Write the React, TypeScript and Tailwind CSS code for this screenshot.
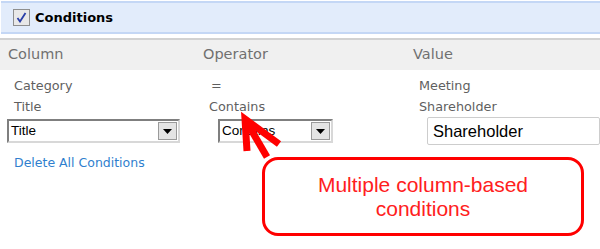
import React from "react";

const ui = { fontFamily: '"DejaVu Sans", Verdana, sans-serif' };
const arial = { fontFamily: '"Liberation Sans", Arial, sans-serif' };

function Select({ width, value }: { width: number; value: string }) {
  return (
    <div
      className="flex h-[24px] items-center border-2 border-t-[#7f7f7f] border-l-[#7f7f7f] border-b-[#d8d8d8] border-r-[#d8d8d8] bg-white"
      style={{ width }}
    >
      <span className="flex-1 pl-[2px] text-[13.5px] text-black" style={arial}>
        {value}
      </span>
      <div className="mr-[1px] flex h-[18px] w-[19px] items-center justify-center border border-[#9a9a9a] bg-[#e4e4e4]">
        <svg width="9" height="5" viewBox="0 0 9 5">
          <path d="M0 0h9L4.5 5z" fill="#000" />
        </svg>
      </div>
    </div>
  );
}

export default function App() {
  return (
    <div className="relative h-[249px] w-[600px] overflow-hidden bg-white" style={ui}>
      {/* Section header */}
      <div className="ml-[1px] mt-[1px] flex h-[33px] items-center gap-[5px] border-y-2 border-[#c4d7f5] bg-[#e2ecfb] pl-[12px]">
        <div className="flex h-[17px] w-[17px] items-center justify-center border border-[#8e8f8f] bg-[#e8e8e8]">
          <svg width="11" height="11" viewBox="0 0 11 11">
            <path d="M1.5 6l2.5 3.5L9.5 1" fill="none" stroke="#2a3fa8" strokeWidth="1.8" />
          </svg>
        </div>
        <span className="text-[13px] font-bold text-black">Conditions</span>
      </div>

      {/* Column headings */}
      <div className="mt-[4px] grid h-[32px] grid-cols-[195px_210px_1fr] items-center border-t-2 border-[#d2d2d2] bg-[#f0f0f0] pl-[8px] text-[14.5px] text-[#707070]">
        <span>Column</span>
        <span>Operator</span>
        <span>Value</span>
      </div>

      {/* Existing conditions */}
      <div className="mt-[5px] grid grid-cols-[196px_209px_1fr] pl-[14px] text-[12.8px] leading-[21px] text-[#5f5f5f]">
        <span>Category</span>
        <span className="pl-[1px]">=</span>
        <span>Meeting</span>
        <span>Title</span>
        <span className="-ml-[1px]">Contains</span>
        <span>Shareholder</span>
      </div>

      {/* New condition */}
      <div className="flex items-center pl-[7px]">
        <Select width={173} value="Title" />
        <div className="ml-[38px]">
          <Select width={115} value="Contains" />
        </div>
        <div
          className="ml-[94px] flex h-[28px] flex-1 items-center rounded-[2px] border border-[#cdcdcd] pl-[5px] text-[16.5px] text-black"
          style={arial}
        >
          Shareholder
        </div>
      </div>

      <div className="mt-[9px] pl-[14px] text-[12.5px] text-[#2f7fce]">Delete All Conditions</div>

      {/* Annotation */}
      <svg className="absolute left-0 top-0" width="600" height="249">
        <path d="M247 151 L245 119 L279 144" fill="none" stroke="#ff0000" strokeWidth="7" strokeLinejoin="miter" />
        <path d="M246 121 L267 157" fill="none" stroke="#ff0000" strokeWidth="7" />
      </svg>
      <div
        className="absolute left-[262px] top-[157px] flex h-[79px] w-[322px] flex-col items-center justify-center rounded-[16px] border-[3px] border-[#ff0000] bg-white text-[21px] leading-[24px] text-[#ff2020]"
        style={arial}
      >
        <span>Multiple column-based</span>
        <span>conditions</span>
      </div>
    </div>
  );
}
